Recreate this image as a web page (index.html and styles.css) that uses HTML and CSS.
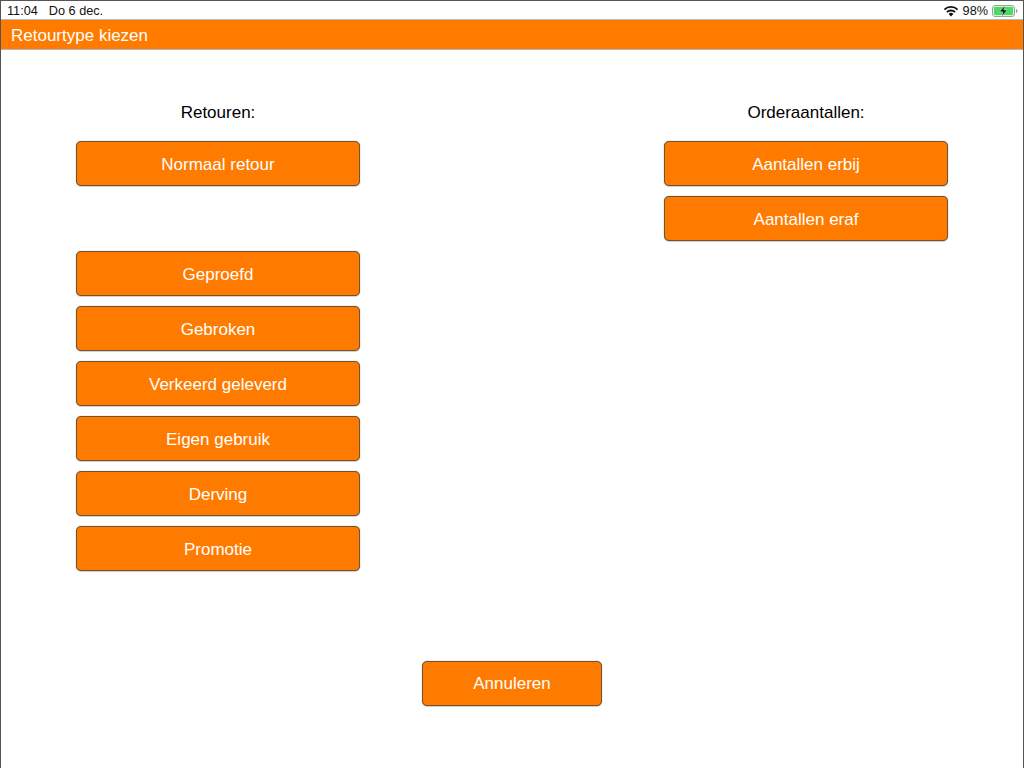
FILE: index.html
```html
<!DOCTYPE html>
<html lang="nl">
<head>
<meta charset="utf-8">
<title>Retourtype kiezen</title>
<link rel="stylesheet" href="styles.css">
</head>
<body>
<div class="screen">
  <div class="status">
    <div class="status-left"><span>11:04</span><span>Do 6 dec.</span></div>
    <div class="status-right">
      <svg class="wifi" width="16" height="12" viewBox="0 0 16 12"><path d="M8 11.500 5.600 8.900a3.400 3.400 0 0 1 4.800 0Z" fill="#111"/><path d="M3.900 7.200a5.800 5.800 0 0 1 8.200 0" fill="none" stroke="#111" stroke-width="1.800"/><path d="M1.400 4.700a9.300 9.300 0 0 1 13.200 0" fill="none" stroke="#111" stroke-width="1.800"/></svg>
      <span>98%</span>
      <svg class="battery" width="26" height="12" viewBox="0 0 26 12"><rect x=".5" y=".5" width="22" height="11" rx="2.500" fill="#fff" stroke="#8fa893"/><rect x="1.800" y="1.800" width="19.400" height="8.400" rx="1.300" fill="#4cd964"/><path d="M24 4v4c.9-.2 1.500-1 1.500-2s-.6-1.800-1.500-2Z" fill="#9a9a9a"/><path d="M12.800 .5 7.500 6.800h3.400L9.800 11.500l5.400-6.500h-3.400Z" fill="#111" stroke="#d8f5dd" stroke-width=".5"/></svg>
    </div>
  </div>
  <header class="title">Retourtype kiezen</header>
  <main class="content">
    <div class="columns">
      <section class="col">
        <h2 class="col-title">Retouren:</h2>
        <button class="btn">Normaal retour</button>
        <div class="group">
          <button class="btn">Geproefd</button>
          <button class="btn">Gebroken</button>
          <button class="btn">Verkeerd geleverd</button>
          <button class="btn">Eigen gebruik</button>
          <button class="btn">Derving</button>
          <button class="btn">Promotie</button>
        </div>
      </section>
      <section class="col">
        <h2 class="col-title">Orderaantallen:</h2>
        <div class="stack">
          <button class="btn">Aantallen erbij</button>
          <button class="btn">Aantallen eraf</button>
        </div>
      </section>
    </div>
    <div class="footer"><button class="btn cancel">Annuleren</button></div>
  </main>
</div>
</body>
</html>
```
FILE: styles.css
```css
* { box-sizing: border-box; }
html, body { margin: 0; height: 100%; background: #fff; }
body { overflow: hidden; font-family: "Liberation Sans", Arial, sans-serif; }
.screen {
  width: 1024px; height: 768px;
  display: flex; flex-direction: column;
  border-left: 1px solid #555; border-right: 1px solid #555;
  border-top: 1px solid #555;
}
.status {
  height: 18px; flex: none;
  display: flex; justify-content: space-between; align-items: center;
  padding: 1px 5px 0 6px;
  font-size: 12.700px; color: #111; background: #fff;
}
.status-left { display: flex; gap: 11px; }
.status-right { display: flex; align-items: center; gap: 4px; }
.title {
  height: 31px; flex: none;
  background: #ff7b00;
  border-top: 1px solid #b9b9b9; border-bottom: 1px solid #b9b9b9;
  color: #fff; font-size: 17px; line-height: 31px;
  padding-left: 10px;
}
.content { flex: 1; display: flex; flex-direction: column; padding: 0 75px; }
.columns { display: flex; justify-content: space-between; padding-top: 51px; height: 611px; flex: none; }
.col { width: 284px; display: flex; flex-direction: column; }
.col-title {
  margin: 0 0 19px; height: 21px;
  font-size: 17px; line-height: 23px; font-weight: 400;
  text-align: center; color: #000; white-space: nowrap;
}
.group { margin-top: 65px; }
.group, .stack { display: flex; flex-direction: column; gap: 10px; }
.btn {
  width: 284px; height: 45px; padding: 2px 0 0;
  background: #ff7b00;
  border: 1px solid #75512e; border-radius: 5px;
  box-shadow: 0 0 1px rgba(0,0,0,.5), 0 1px 1px rgba(0,0,0,.15);
  color: #fff; font: 17px "Liberation Sans", Arial, sans-serif;
  text-align: center;
}
.footer { display: flex; justify-content: center; }
.cancel { width: 180px; padding: 0; }
```
